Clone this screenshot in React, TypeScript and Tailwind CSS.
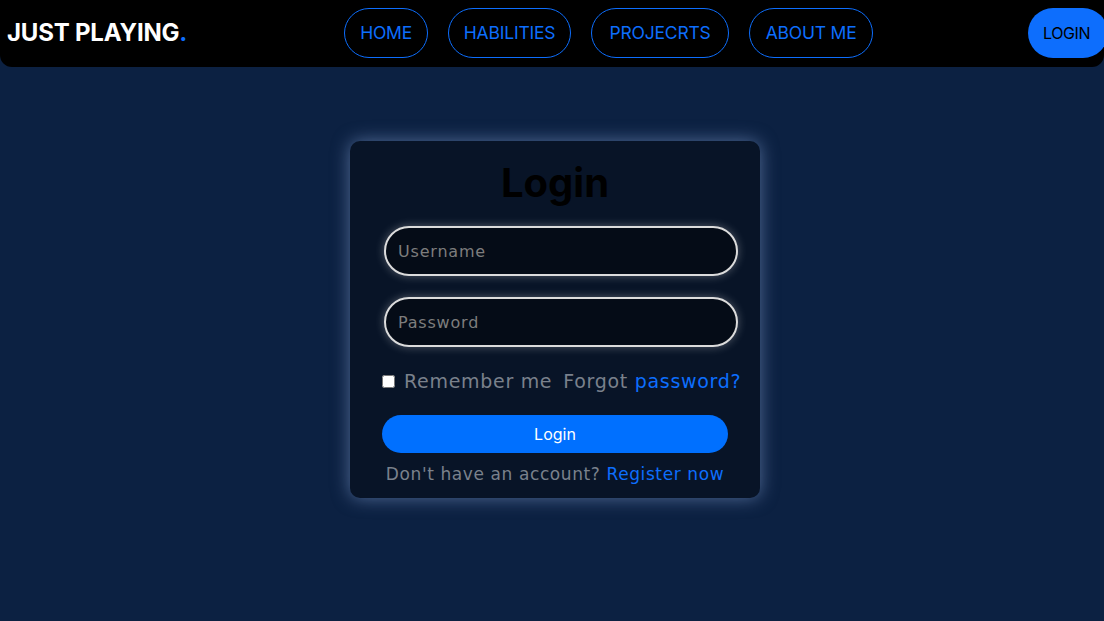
import { useState } from 'react'

const links = [
  { label: 'HOME', w: 'w-[84px]' },
  { label: 'HABILITIES', w: 'w-[123px]' },
  { label: 'PROJECRTS', w: 'w-[138px]' },
  { label: 'ABOUT ME', w: 'w-[124px]' },
]

function Navbar() {
  return (
    <nav className="flex h-[67px] items-center justify-between rounded-b-xl bg-black pb-[2px] pl-[7px]">
      <a href="#" className="text-[24px] font-bold tracking-[-0.2px] text-white">
        JUST PLAYING<span className="text-[#0d6efd]">.</span>
      </a>
      <ul className="ml-[2px] flex gap-5">
        {links.map((l) => (
          <li key={l.label}>
            <a
              href="#"
              className={`flex h-[50px] items-center justify-center rounded-full border border-[#0d6efd] pt-[2px] text-[17.5px] tracking-[-0.2px] text-[#0d6efd] ${l.w}`}
            >
              {l.label}
            </a>
          </li>
        ))}
      </ul>
      <button className="mr-[-4px] h-[50px] w-[80px] rounded-full bg-[#0d6efd] pr-[3px] text-[16px] tracking-[-0.4px] text-black">
        LOGIN
      </button>
    </nav>
  )
}

function LoginCard() {
  const [remember, setRemember] = useState(false)
  return (
    <div className="ml-[6px] w-[410px] rounded-[10px] bg-[#081427] px-[32px] pb-[12px] pt-[16px] shadow-[0_0_18px_rgba(140,170,220,0.55)]">
      <h1 className="text-center text-[40px] font-bold leading-[52px] text-black">Login</h1>
      <div className="mt-[17px] flex flex-col gap-[21px] px-[2px] font-['DejaVu_Sans',sans-serif]">
        <input
          placeholder="Username"
          className="h-[50px] w-[354px] rounded-full border-2 border-[#dcdcdc] bg-[#050c17] px-[12px] text-[16px] tracking-[0.8px] text-white outline-none shadow-[0_0_10px_rgba(255,255,255,0.3)] placeholder:text-[#7d7d7d]"
        />
        <input
          type="password"
          placeholder="Password"
          className="h-[50px] w-[354px] rounded-full border-2 border-[#dcdcdc] bg-[#050c17] px-[12px] text-[16px] tracking-[0.8px] text-white outline-none shadow-[0_0_10px_rgba(255,255,255,0.3)] placeholder:text-[#7d7d7d]"
        />
      </div>
      <div className="mt-[22px] flex h-[24px] items-center whitespace-nowrap font-['DejaVu_Sans',sans-serif] text-[19px] leading-[24px] tracking-[0.7px] text-[#7a818c]">
        <input
          type="checkbox"
          checked={remember}
          onChange={(e) => setRemember(e.target.checked)}
          className="h-[13px] w-[13px] shrink-0"
        />
        <label className="ml-[9px] shrink-0">Remember me</label>
        <span className="ml-[11px] shrink-0">
          Forgot <a href="#" className="text-[#0d6efd]">password?</a>
        </span>
      </div>
      <button className="mt-[22px] h-[38px] w-[346px] rounded-full bg-[#0070ff] text-[16px] text-white">
        Login
      </button>
      <p className="mt-[9px] whitespace-nowrap text-center font-['DejaVu_Sans',sans-serif] text-[17px] leading-[24px] tracking-[0.6px] text-[#7a818c]">
        Don't have an account? <a href="#" className="text-[#0d6efd]">Register now</a>
      </p>
    </div>
  )
}

export default function App() {
  return (
    <div className="min-h-[621px] overflow-hidden bg-[#0c2142] font-['Inter',sans-serif]">
      <Navbar />
      <main className="flex justify-center pt-[74px]">
        <LoginCard />
      </main>
    </div>
  )
}
